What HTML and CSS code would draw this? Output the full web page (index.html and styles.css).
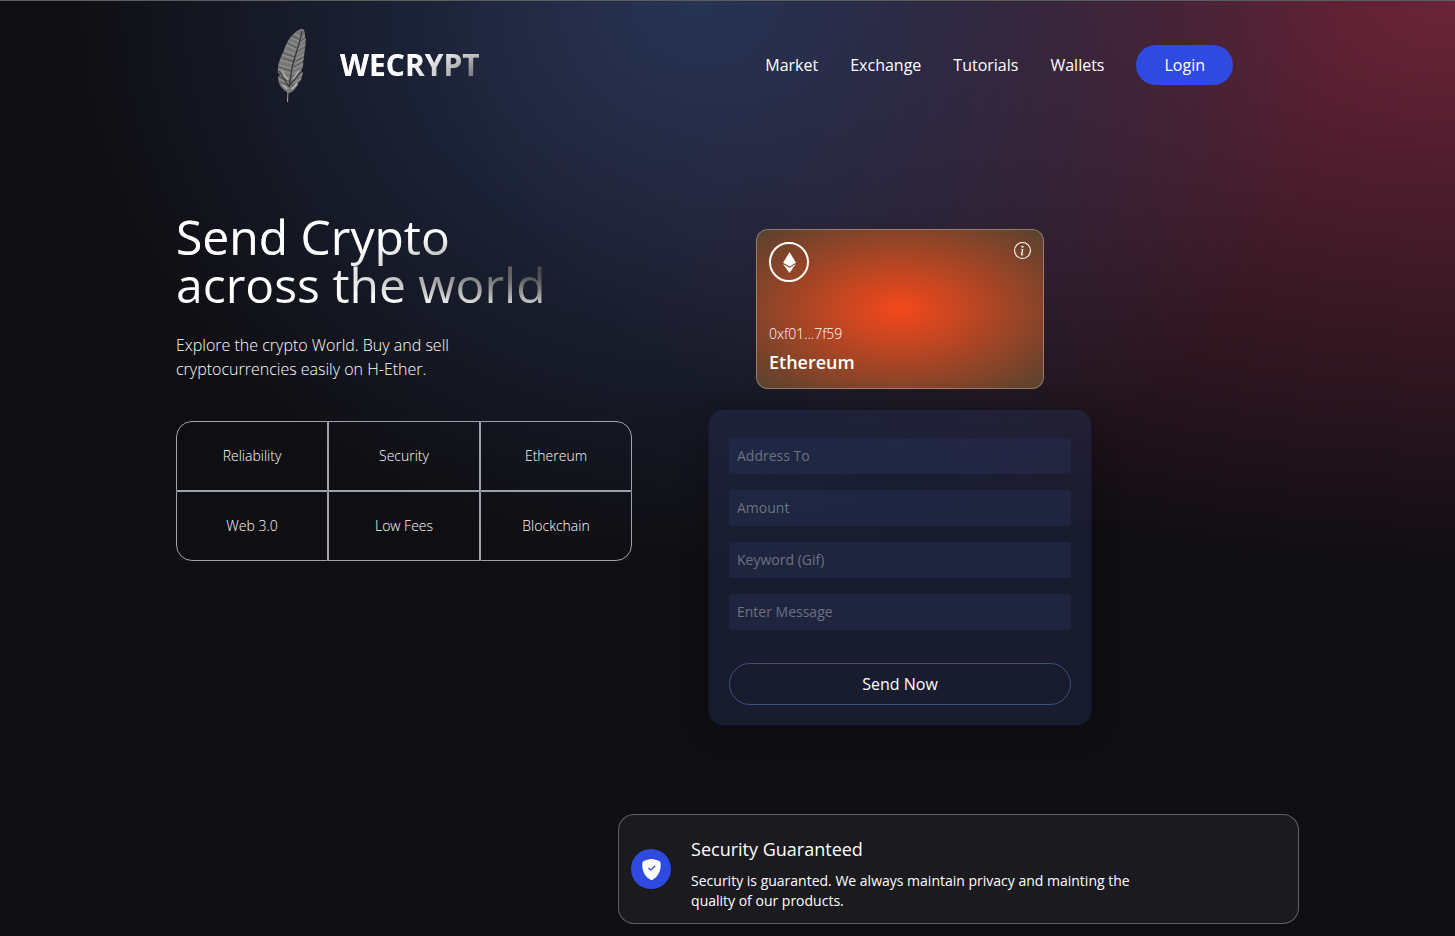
FILE: index.html
```html
<!DOCTYPE html>
<html lang="en">
<head>
<meta charset="utf-8">
<title>WECRYPT</title>
<link rel="stylesheet" href="styles.css">
</head>
<body>
<div class="welcome">
  <header class="nav">
    <div class="brand">
      <svg class="feather" viewBox="0 0 40 76" aria-hidden="true">
        <path fill="#777775" d="M31 2C34 1 35 5 35 9C37 17 34 25 34 31L33 34C34 39 32 42 31 44L33 46L31 53L29 55C27 60 24 64 20 66L17 65C11 62 8 56 8 50L10 48L8 46C7 37 11 30 14 23C17 13 24 4 31 2Z"/>
        <g fill="none" stroke="#a6a6a3" stroke-width=".7">
          <path d="M30 10L25 7M29 14L21 11M28 19L18 14M27 23L16 18M26 28L14 23M25 32L12 28M24 37L10 33M23 42L9 38M22 47L8 42M21 52L10 48M20 57L9 52M19 62L11 57"/>
          <path d="M30 12L35 8M29 17L36 12M28 22L35 17M27 27L34 22M26 32L34 27M25 37L34 32M24 42L33 37M23 47L31 43M22 52L32 47M21 57L31 52M20 62L28 58"/>
        </g>
        <g fill="none" stroke="#4a4a4c" stroke-width=".7">
          <path d="M29 12L22 9M27 21L17 16M25 30L13 26M24 35L12 31M22 44L8 40M21 55L9 50M20 60L11 55"/>
          <path d="M30 15L36 10M28 25L35 20M26 34L34 30M24 40L33 35M22 50L32 45M21 60L29 55"/>
        </g>
        <path fill="none" stroke="#353537" stroke-width="1.3" d="M32 4C30 18 22 34 21 48L19 60"/>
        <path fill="none" stroke="#3c3c3e" stroke-width="1.2" d="M9 44L13 51L19 59M31 45L25 52L20 58"/>
        <path fill="none" stroke="#bcbcb9" stroke-width="1.2" d="M12 44L18 53M29 44L23 52M13 58L17 62M27 56L22 62"/>
        <path fill="none" stroke="#a5a5a3" stroke-width="1" d="M18 64L17.5 75"/>
      </svg>
      <span class="brand-name text-gradient">WECRYPT</span>
    </div>
    <nav class="links">
      <a href="#market">Market</a>
      <a href="#exchange">Exchange</a>
      <a href="#tutorials">Tutorials</a>
      <a href="#wallets">Wallets</a>
      <button type="button" class="login">Login</button>
    </nav>
  </header>

  <main class="hero">
    <section class="intro">
      <h1 class="text-gradient">Send Crypto<br>across the world</h1>
      <p class="lead">Explore the crypto World. Buy and sell cryptocurrencies easily on H-Ether.</p>
      <ul class="features">
        <li>Reliability</li>
        <li>Security</li>
        <li>Ethereum</li>
        <li>Web 3.0</li>
        <li>Low Fees</li>
        <li>Blockchain</li>
      </ul>
    </section>

    <section class="transfer">
      <div class="eth-card">
        <div class="eth-top">
          <span class="eth-logo">
            <svg width="21" height="21" viewBox="0 0 24 24" fill="currentColor" aria-hidden="true"><path d="M11.944 17.97L4.58 13.62 11.943 24l7.37-10.38-7.372 4.35h.003zM12.056 0L4.69 12.223l7.365 4.354 7.365-4.35L12.056 0z"/></svg>
          </span>
          <svg width="17" height="17" viewBox="0 0 16 16" fill="currentColor" aria-hidden="true"><path d="M8 15A7 7 0 1 1 8 1a7 7 0 0 1 0 14zm0 1A8 8 0 1 0 8 0a8 8 0 0 0 0 16z"/><path d="m8.93 6.588-2.29.287-.082.38.45.083c.294.07.352.176.288.469l-.738 3.468c-.194.897.105 1.319.808 1.319.545 0 1.178-.252 1.465-.598l.088-.416c-.2.176-.492.246-.686.246-.275 0-.375-.193-.304-.533L8.93 6.588zM9 4.5a1 1 0 1 1-2 0 1 1 0 0 1 2 0z"/></svg>
        </div>
        <div>
          <p class="eth-address">0xf01...7f59</p>
          <p class="eth-name">Ethereum</p>
        </div>
      </div>

      <form class="send-form">
        <input type="text" placeholder="Address To" aria-label="Address To">
        <input type="text" inputmode="decimal" placeholder="Amount" aria-label="Amount">
        <input type="text" placeholder="Keyword (Gif)" aria-label="Keyword (Gif)">
        <input type="text" placeholder="Enter Message" aria-label="Enter Message">
        <button type="button" class="send">Send Now</button>
      </form>
    </section>
  </main>
</div>

<section class="services">
  <article class="service">
    <span class="service-icon">
      <svg width="21" height="21" viewBox="0 0 16 16" fill="currentColor" aria-hidden="true"><path fill-rule="evenodd" d="M8 0c-.69 0-1.843.265-2.928.56-1.11.3-2.229.655-2.887.87a1.54 1.54 0 0 0-1.044 1.262c-.596 4.477.787 7.795 2.465 9.99a11.777 11.777 0 0 0 2.517 2.453c.386.273.744.482 1.048.625.28.132.581.24.829.24s.548-.108.829-.24a7.159 7.159 0 0 0 1.048-.625 11.775 11.775 0 0 0 2.517-2.453c1.678-2.195 3.061-5.513 2.465-9.99a1.541 1.541 0 0 0-1.044-1.263 62.467 62.467 0 0 0-2.887-.87C9.843.266 8.69 0 8 0zm2.146 5.146a.5.5 0 0 1 .708.708l-3 3a.5.5 0 0 1-.708 0l-1.5-1.5a.5.5 0 1 1 .708-.708L7.5 7.793l2.646-2.647z"/></svg>
    </span>
    <div class="service-text">
      <h2>Security Guaranteed</h2>
      <p>Security is guaranted. We always maintain privacy and mainting the quality of our products.</p>
    </div>
  </article>
</section>
</body>
</html>
```
FILE: styles.css
```css
* {
  box-sizing: border-box;
}

body {
  margin: 0;
  border-top: 1px solid #5c5d5f;
  background: #0f0e12;
  color: #fff;
  font: 400 16px/24px "Open Sans", sans-serif;
}

h1, h2, p, ul {
  margin: 0;
  padding: 0;
}

button, input {
  font: inherit;
  color: inherit;
}

button {
  cursor: pointer;
}

.welcome {
  background-image:
    radial-gradient(44% 70% at 48% 0%, hsl(223, 38%, 24%) 0, transparent 100%),
    radial-gradient(at 100% 0%, hsl(342, 50%, 28%) 0, transparent 50%);
}

.text-gradient {
  background-color: #fff;
  background-image:
    radial-gradient(at 4% 36%, hsla(0, 0%, 100%, 1) 0, transparent 53%),
    radial-gradient(at 100% 60%, rgb(0, 0, 0) 0, transparent 50%);
  -webkit-background-clip: text;
  background-clip: text;
  color: transparent;
}

/* Navigation */
.nav {
  display: flex;
  align-items: center;
  justify-content: space-between;
  max-width: 1011px;
  min-height: 128px;
  margin: 0 auto;
}

.brand {
  display: flex;
  align-items: center;
  gap: 30px;
  padding-left: 48px;
}

.feather {
  width: 40px;
  height: 76px;
}

.brand-name {
  padding: 24px 64px 24px 0;
  font-size: 30px;
  line-height: 36px;
  font-weight: 700;
}

.links {
  display: flex;
  align-items: center;
  gap: 32px;
}

.links a {
  color: #fff;
  text-decoration: none;
}

.login {
  padding: 8px 28px;
  border: 0;
  border-radius: 20px;
  background: #2f4ae0;
}

/* Hero */
.hero {
  display: flex;
  gap: 40px;
  max-width: 1103px;
  margin: 0 auto;
  padding: 80px 0;
}

.intro {
  flex: 0 1 456px;
}

h1 {
  padding: 4px 0;
  font-size: 48px;
  line-height: 48px;
  font-weight: 400;
}

.lead {
  max-width: 336px;
  margin-top: 20px;
  font-weight: 300;
}

.features {
  display: grid;
  grid-template-columns: repeat(3, 1fr);
  width: 100%;
  margin-top: 40px;
  list-style: none;
}

.features li {
  display: flex;
  align-items: center;
  justify-content: center;
  min-height: 70px;
  border: 1px solid #9ca3af;
  font-size: 14px;
  line-height: 20px;
  font-weight: 300;
}

.features li:nth-child(1) { border-top-left-radius: 16px; }
.features li:nth-child(3) { border-top-right-radius: 16px; }
.features li:nth-child(4) { border-bottom-left-radius: 16px; }
.features li:nth-child(6) { border-bottom-right-radius: 16px; }

.transfer {
  display: flex;
  flex: 0 1 456px;
  flex-direction: column;
  align-items: center;
  gap: 20px;
  padding-top: 20px;
}

.eth-card {
  display: flex;
  flex-direction: column;
  justify-content: space-between;
  width: 288px;
  min-height: 160px;
  padding: 12px;
  border: 1px solid rgba(255, 255, 255, 0.3);
  border-radius: 12px;
  background: radial-gradient(at 50% 50%, #f5481b 0, #57422f 100%);
}

.eth-top {
  display: flex;
  align-items: flex-start;
  justify-content: space-between;
}

.eth-logo {
  display: flex;
  align-items: center;
  justify-content: center;
  width: 40px;
  height: 40px;
  border: 2px solid #fff;
  border-radius: 50%;
}

.eth-address {
  font-size: 14px;
  line-height: 20px;
  font-weight: 300;
}

.eth-name {
  margin-top: 4px;
  font-size: 18px;
  line-height: 28px;
  font-weight: 600;
}

.send-form {
  display: flex;
  flex-direction: column;
  gap: 16px;
  width: 384px;
  max-width: 100%;
  padding: 28px 20px 20px;
  border: 1px solid rgba(0, 0, 0, 0.3);
  border-radius: 16px;
  background: rgba(39, 51, 89, 0.4);
  box-shadow: 0 4px 30px rgba(0, 0, 0, 0.2);
}

.send-form input {
  width: 100%;
  padding: 8px;
  border: 0;
  border-radius: 2px;
  background: rgba(39, 51, 89, 0.4);
  font-size: 14px;
  line-height: 20px;
}

.send-form input::placeholder {
  color: #6b7280;
  opacity: 1;
}

.send {
  margin-top: 17px;
  padding: 8px;
  border: 1px solid #3d4f7c;
  border-radius: 21px;
  background: transparent;
}

/* Services */
.services {
  display: grid;
  grid-template-columns: 19fr 28fr;
  max-width: 1143px;
  margin: 0 auto;
  padding: 8px 0 12px;
}

.service {
  display: flex;
  grid-column: 2;
  align-items: center;
  gap: 20px;
  padding: 12px;
  border: 1px solid rgba(255, 255, 255, 0.3);
  border-radius: 16px;
  background: rgba(255, 255, 255, 0.05);
}

.service-icon {
  display: flex;
  flex: none;
  align-items: center;
  justify-content: center;
  width: 40px;
  height: 40px;
  border-radius: 50%;
  background: #2f4ae0;
}

.service-text {
  flex: 1;
}

.service h2 {
  margin-top: 8px;
  font-size: 18px;
  line-height: 28px;
  font-weight: 400;
}

.service p {
  width: 75%;
  margin-top: 8px;
  font-size: 14px;
  line-height: 20px;
}
```
